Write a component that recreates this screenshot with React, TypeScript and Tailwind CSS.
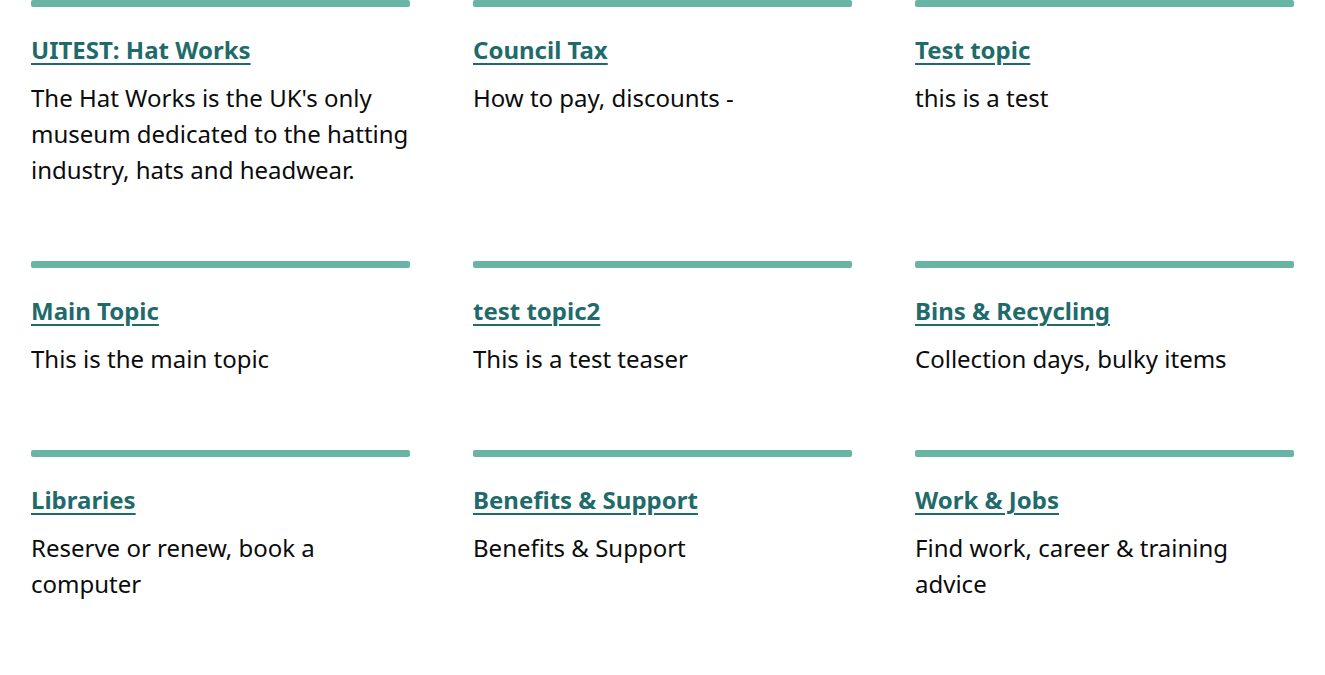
const topics = [
  { title: 'UITEST: Hat Works', teaser: "The Hat Works is the UK's only museum dedicated to the hatting industry, hats and headwear." },
  { title: 'Council Tax', teaser: 'How to pay, discounts -' },
  { title: 'Test topic', teaser: 'this is a test' },
  { title: 'Main Topic', teaser: 'This is the main topic' },
  { title: 'test topic2', teaser: 'This is a test teaser' },
  { title: 'Bins & Recycling', teaser: 'Collection days, bulky items' },
  { title: 'Libraries', teaser: 'Reserve or renew, book a computer' },
  { title: 'Benefits & Support', teaser: 'Benefits & Support' },
  { title: 'Work & Jobs', teaser: 'Find work, career & training advice' },
]

function TopicCard({ title, teaser }: { title: string; teaser: string }) {
  return (
    <div className="pb-[73px]">
      <div className="h-[7px] rounded-[2px] bg-[#68b5a6]" />
      <h2 className="mt-[27px] text-[24px] leading-[32px] font-bold">
        <a href="#" className="text-[#1f6b6b] underline decoration-[2px] underline-offset-[4px]">
          {title}
        </a>
      </h2>
      <p className="mt-[14px] text-[24px] leading-[36px] text-[#0b0c0c]">{teaser}</p>
    </div>
  )
}

export default function App() {
  return (
    <div
      className="min-h-[675px] bg-white"
      style={{ fontFamily: '"Noto Sans", "Open Sans", sans-serif' }}
    >
      <div className="grid grid-cols-3 gap-x-[63px] px-[31px]">
        {topics.map((t) => (
          <TopicCard key={t.title} title={t.title} teaser={t.teaser} />
        ))}
      </div>
    </div>
  )
}
